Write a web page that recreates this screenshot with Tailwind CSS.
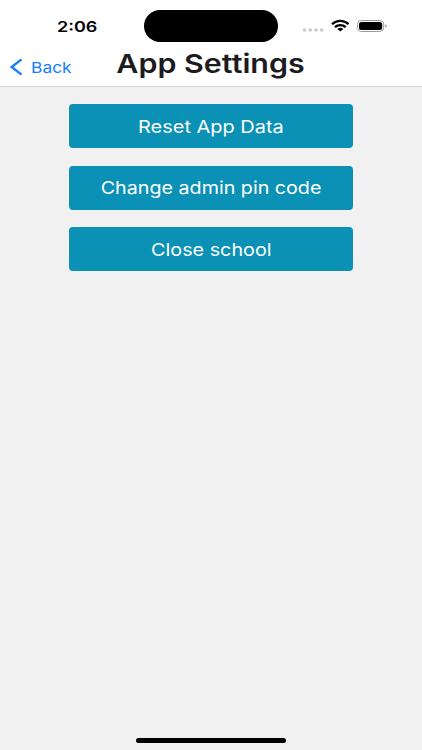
<!DOCTYPE html>
<html lang="en">
<head>
<meta charset="utf-8">
<title>App Settings</title>
<script src="https://cdn.jsdelivr.net/npm/@tailwindcss/browser@4"></script>
</head>
<body class="font-['Inter','Liberation_Sans',sans-serif]">
<div class="flex h-[750px] w-[422px] flex-col overflow-hidden bg-[#f1f1f1]">
  <header class="flex h-[87px] shrink-0 flex-col border-b border-[#d8d8d8] bg-white">
    <div class="grid h-[43px] grid-cols-[144px_134px_144px] pt-[10px]">
      <div class="flex h-8 items-center pl-[57px]"><span class="origin-left scale-x-[1.2] text-[15px] leading-none font-semibold text-black">2:06</span></div>
      <div class="h-8 rounded-full bg-black"></div>
      <div class="flex h-8 items-center pl-[24px]">
        <svg class="h-[14px] w-[90px]" viewBox="0 0 90 14" fill="none">
          <g fill="#c8c8c8"><circle cx="2.5" cy="11" r="1.75"/><circle cx="8.3" cy="11" r="1.75"/><circle cx="14" cy="11" r="1.75"/><circle cx="19.7" cy="11" r="1.75"/></g>
          <g stroke="#000" stroke-width="2.3"><path d="M30 5.1C35 .8 41.6 .8 46.6 5.1"/><path d="M32.9 8.2C36 5.300 40.600 5.300 43.700 8.200"/></g>
          <path d="M35.300 10q3-2.300 6 0L38.300 12.600z" fill="#000"/>
          <rect x="55.500" y="1.500" width="26.200" height="11" rx="4" stroke="#999"/>
          <rect x="57" y="3" width="23.200" height="8" rx="2.500" fill="#000"/>
          <path d="M83.300 5.300q3 1.700 0 3.400z" fill="#999"/>
        </svg>
      </div>
    </div>
    <div class="grid h-[43px] grid-cols-[117px_188px_117px]">
      <div class="flex h-[47px] items-center pl-[10px] text-[#157efb]">
        <svg class="h-[18px] w-[13px]" viewBox="0 0 13 18" fill="none" stroke="currentColor" stroke-width="2.300"><path d="M11.500 1.300L1.700 9L11.500 16.700"/></svg>
        <span class="ml-[8px] origin-left scale-x-[1.160] pt-px text-[15px] leading-none">Back</span>
      </div>
      <h1 class="flex h-[41px] items-center justify-center text-[26px] leading-none font-semibold whitespace-nowrap text-[#1c1c1e]"><span class="scale-x-[1.170]">App Settings</span></h1>
    </div>
  </header>
  <main class="flex grow flex-col items-center gap-[17.500px] pt-[17px] text-[17.500px] text-white">
    <button class="h-[44px] w-[284px] rounded-[4px] bg-[#0a91b5] pt-[2px]"><span class="inline-block scale-x-[1.140]">Reset App Data</span></button>
    <button class="h-[44px] w-[284px] rounded-[4px] bg-[#0a91b5] pt-[2px]"><span class="inline-block scale-x-[1.125]">Change admin pin code</span></button>
    <button class="h-[44px] w-[284px] rounded-[4px] bg-[#0a91b5] pt-[2px]"><span class="inline-block scale-x-[1.130]">Close school</span></button>
  </main>
  <footer class="flex h-3 shrink-0 justify-center"><div class="h-[4.500px] w-[150px] rounded-full bg-black"></div></footer>
</div>
</body>
</html>
